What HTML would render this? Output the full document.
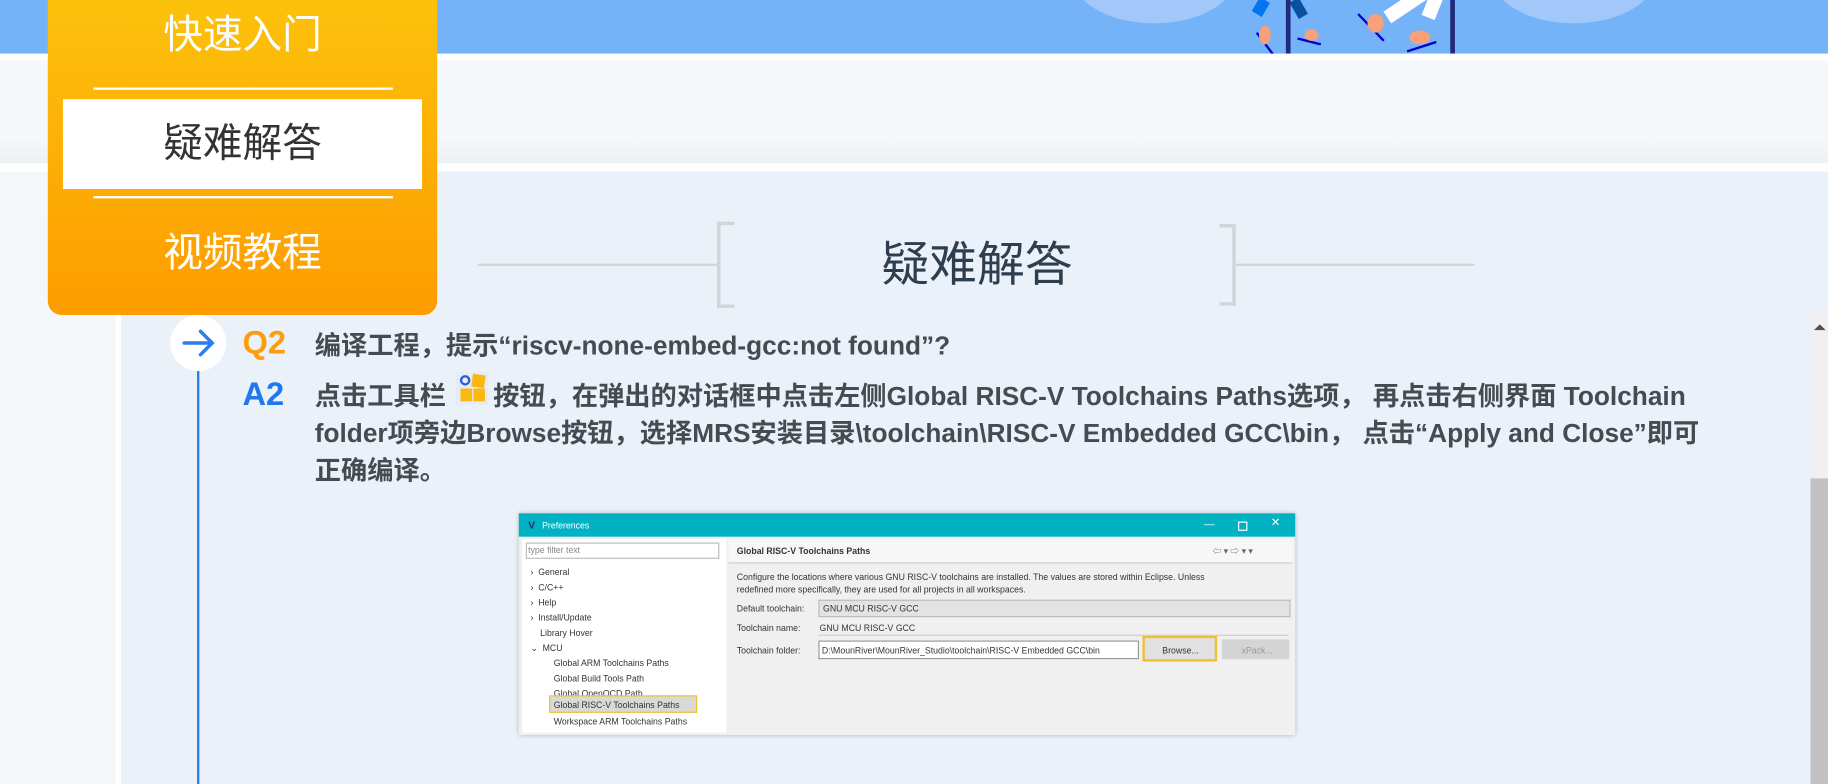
<!DOCTYPE html>
<html><head><meta charset="utf-8">
<style>
html,body{margin:0;padding:0;width:1828px;height:784px;overflow:hidden;background:#f4f7f9}
#w{position:absolute;left:0;top:0;width:1568px;height:672px;transform:scale(1.1658,1.1667);transform-origin:0 0;font-family:"Liberation Sans","Noto Sans CJK SC",sans-serif}
.a{position:absolute}
.nav{position:absolute;left:0;width:334px;text-align:center;font-size:34px;color:#fff;line-height:40px}
.dt{font-size:7.5px;color:#333;white-space:nowrap;font-family:"Liberation Sans","Noto Sans CJK SC",sans-serif}
.txt{font-size:22.5px;font-weight:bold;color:#444c52;line-height:32px;white-space:nowrap}
</style></head><body><div id="w">
<div class="a" style="left:0;top:0;width:1568px;height:46px;background:#74b3f8"></div>
<svg class="a" style="left:900px;top:0" width="600" height="46">
<ellipse cx="90" cy="-20" rx="70" ry="40" fill="#a2c8fa"/>
<ellipse cx="450" cy="-20" rx="70" ry="40" fill="#a2c8fa"/>
<path d="M185 0 L178 12" stroke="#0575ef" stroke-width="10"/>
<path d="M210 0 L218 14" stroke="#0a4fa0" stroke-width="9"/>
<path d="M178 28 L193 48 M213 33 L233 38 M265 12 L287 35 M307 44 L332 36" stroke="#0000d0" stroke-width="2"/>
<ellipse cx="185" cy="30" rx="5" ry="8" fill="#f7a07a"/>
<ellipse cx="225" cy="30" rx="6" ry="5" fill="#f7a07a"/>
<ellipse cx="280" cy="20" rx="7" ry="8" fill="#f7a07a"/>
<ellipse cx="318" cy="32" rx="9" ry="6" fill="#f7a07a"/>
<path d="M290 15 L320 -5 M325 15 L333 -5" stroke="#fff" stroke-width="12"/>
<rect x="203" y="0" width="4" height="46" fill="#1f2a7a"/>
<rect x="344" y="0" width="4" height="46" fill="#1f2a7a"/>
</svg>
<div class="a" style="left:0;top:46px;width:1568px;height:6px;background:#fff"></div>
<div class="a" style="left:0;top:52px;width:1568px;height:88px;background:linear-gradient(#f4f8fa 75%,#eef1f1)"></div>
<div class="a" style="left:0;top:140px;width:1568px;height:7px;background:#fff"></div>
<div class="a" style="left:99px;top:147px;width:5px;height:525px;background:#fff"></div>
<div class="a" style="left:104px;top:147px;width:1464px;height:525px;background:#eaf1f8"></div>
<!-- title -->
<div class="a" style="left:410px;top:226px;width:205px;height:2px;background:#d3d6d8"></div>
<div class="a" style="left:615px;top:190px;width:15px;height:74px;border:3px solid #d3d6d8;border-right:none;box-sizing:border-box"></div>
<div class="a" style="left:1046px;top:192px;width:14px;height:70px;border:3px solid #d3d6d8;border-left:none;box-sizing:border-box"></div>
<div class="a" style="left:1060px;top:226px;width:205px;height:2px;background:#d3d6d8"></div>
<div class="a" style="left:630px;top:203px;width:416px;text-align:center;font-size:41px;color:#2e3e4e;line-height:48px">疑难解答</div>
<!-- orange nav -->
<div class="a" style="left:41px;top:0;width:334px;height:270px;border-radius:0 0 12px 12px;background:linear-gradient(#fcc10b,#fe9c00)">
<div class="nav" style="top:10px">快速入门</div>
<div class="a" style="left:39px;top:75px;width:257px;height:2px;background:#fff"></div>
<div class="a" style="left:13px;top:85px;width:308px;height:77px;background:#fff"></div>
<div class="nav" style="top:103px;color:#333">疑难解答</div>
<div class="a" style="left:39px;top:168px;width:257px;height:2px;background:#fff"></div>
<div class="nav" style="top:197px">视频教程</div>
</div>
<!-- timeline -->
<div class="a" style="left:169px;top:318px;width:2px;height:354px;background:#2a7cf0"></div>
<div class="a" style="left:146px;top:270px;width:48px;height:48px;border-radius:50%;background:#fff"></div>
<svg class="a" style="left:154px;top:280px" width="32" height="28"><path d="M4 14 H28 M18 4 L28 14 L18 24" stroke="#2a7cf0" stroke-width="3" fill="none" stroke-linecap="round"/></svg>
<div class="a" style="left:208px;top:278px;font-size:28px;font-weight:bold;color:#fb9d0f">Q2</div>
<div class="a txt" style="left:270px;top:281px">编译工程，提示“riscv-none-embed-gcc:not found”?</div>
<div class="a" style="left:208px;top:322px;font-size:28px;font-weight:bold;color:#1f78f0">A2</div>
<div class="a txt" style="left:270px;top:324px">点击工具栏 <span style="display:inline-block;width:28px;height:22px;vertical-align:-2px"></span> 按钮，在弹出的对话框中点击左侧Global RISC-V Toolchains Paths选项， 再点击右侧界面 Toolchain<br>folder项旁边Browse按钮，选择MRS安装目录\toolchain\RISC-V Embedded GCC\bin， 点击“Apply and Close”即可<br>正确编译。</div>
<svg class="a" style="left:391px;top:319px" width="28" height="28"><rect x="0" y="0" width="28" height="28" fill="#e4ecf7"/><rect x="14" y="2" width="11" height="11" fill="#fdb810" transform="rotate(8 19 7)"/><rect x="4" y="14" width="10" height="11" fill="#fdb810"/><rect x="15" y="14" width="10" height="11" fill="#fdb810"/><circle cx="8" cy="7" r="3.5" fill="none" stroke="#2a5fd0" stroke-width="2"/></svg>
<!-- dialog -->
<div class="a" style="left:445px;top:440px;width:666px;height:190px;background:#f0f0f0;box-shadow:0 0 4px rgba(0,0,0,.25)">
<div class="a" style="left:0;top:0;width:666px;height:20px;background:#00b2c3"></div>
<div class="a dt" style="left:8px;top:5px;font-weight:bold;color:#1b2e80;font-size:9px">V</div>
<div class="a dt" style="left:20px;top:6px;color:#fff">Preferences</div>
<div class="a dt" style="left:588px;top:4px;color:#fff;font-size:9px">—</div>
<div class="a" style="left:617px;top:7px;width:6px;height:6px;border:1px solid #fff"></div>
<div class="a dt" style="left:645px;top:3px;color:#fff;font-size:10px">✕</div>
<div class="a" style="left:3px;top:22px;width:175px;height:166px;background:#fff"></div>
<div class="a" style="left:6px;top:25px;width:164px;height:12px;border:1px solid #bbb;background:#fff"></div>
<div class="a dt" style="left:8px;top:27px;color:#888">type filter text</div>
<div class="a dt" style="left:10px;top:44px;line-height:13px">›&nbsp; General<br>›&nbsp; C/C++<br>›&nbsp; Help<br>›&nbsp; Install/Update<br>&nbsp;&nbsp;&nbsp; Library Hover<br>⌄&nbsp; MCU</div>
<div class="a dt" style="left:30px;top:122px;line-height:13px">Global ARM Toolchains Paths<br>Global Build Tools Path<br>Global OpenOCD Path</div>
<div class="a" style="left:26px;top:156px;width:127px;height:15px;border:1.5px solid #f0c030;background:#d9d9d9;box-sizing:border-box"></div>
<div class="a dt" style="left:30px;top:160px">Global RISC-V Toolchains Paths</div>
<div class="a dt" style="left:30px;top:174px">Workspace ARM Toolchains Paths</div>
<div class="a" style="left:180px;top:22px;width:484px;height:20px;background:#f7f7f7;border-bottom:1px solid #ccc"></div>
<div class="a dt" style="left:187px;top:28px;font-weight:bold">Global RISC-V Toolchains Paths</div>
<div class="a dt" style="left:595px;top:27px;color:#666">⇦ ▾ ⇨ ▾ ▾</div>
<div class="a dt" style="left:187px;top:49px;line-height:11px">Configure the locations where various GNU RISC-V toolchains are installed. The values are stored within Eclipse. Unless<br>redefined more specifically, they are used for all projects in all workspaces.</div>
<div class="a dt" style="left:187px;top:77px">Default toolchain:</div>
<div class="a" style="left:257px;top:74px;width:403px;height:13px;background:#e3e3e3;border:1px solid #bbb"></div>
<div class="a dt" style="left:261px;top:77px">GNU MCU RISC-V GCC</div>
<div class="a dt" style="left:187px;top:94px">Toolchain name:</div>
<div class="a dt" style="left:258px;top:94px">GNU MCU RISC-V GCC</div>
<div class="a" style="left:257px;top:104px;width:403px;height:1px;background:#ccc"></div>
<div class="a dt" style="left:187px;top:113px">Toolchain folder:</div>
<div class="a" style="left:257px;top:109px;width:273px;height:14px;background:#fff;border:1px solid #999"></div>
<div class="a dt" style="left:260px;top:113px">D:\MounRiver\MounRiver_Studio\toolchain\RISC-V Embedded GCC\bin</div>
<div class="a" style="left:535px;top:105px;width:64px;height:22px;border:2px solid #f0c030;box-sizing:border-box;background:#e1e1e1"></div>
<div class="a dt" style="left:552px;top:113px">Browse...</div>
<div class="a" style="left:603px;top:108px;width:58px;height:17px;background:#d4d4d4"></div>
<div class="a dt" style="left:620px;top:113px;color:#999">xPack...</div>
</div>
<!-- scrollbar -->
<div class="a" style="left:1553px;top:269px;width:15px;height:403px;background:#f0f0f0"></div>
<div class="a" style="left:1556px;top:278px;width:0;height:0;border:5px solid transparent;border-bottom:5px solid #505050;border-top:none"></div>
<div class="a" style="left:1553px;top:410px;width:15px;height:262px;background:#c1c1c1"></div>
</div></body></html>
